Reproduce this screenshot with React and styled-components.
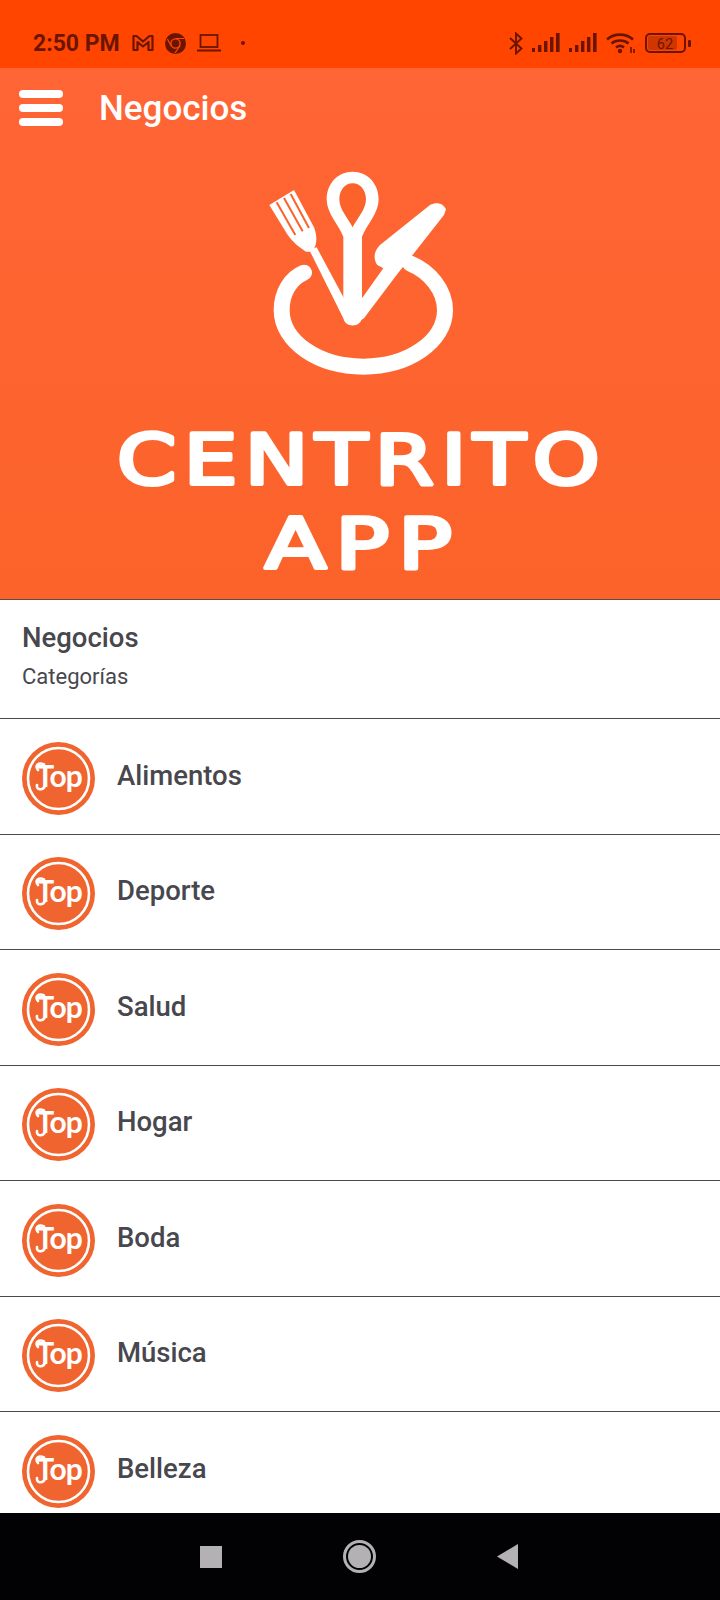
import React from "react";
import styled, { createGlobalStyle } from "styled-components";

const orange = "#fb632a";
const statusInk = "#6b1500";
const ink = "#47474d";

const categories = ["Alimentos", "Deporte", "Salud", "Hogar", "Boda", "Música", "Belleza"];

const GlobalStyle = createGlobalStyle`
  html, body {
    margin: 0;
    padding: 0;
    background: #fff;
    font-family: Roboto, "Liberation Sans", sans-serif;
  }
`;

const Screen = styled.div`
  width: 720px;
  height: 1600px;
  display: flex;
  flex-direction: column;
  overflow: hidden;
`;

const StatusBar = styled.div`
  height: 68px;
  flex-shrink: 0;
  background: #ff4500;
  display: flex;
  align-items: center;
  justify-content: space-between;
  padding: 18px 29px 0 33px;
  box-sizing: border-box;
  color: ${statusInk};
`;

const StatusGroup = styled.div`
  display: flex;
  align-items: center;
  gap: ${props => props.gap || 10}px;
`;

const Clock = styled.span`
  font-size: 23px;
  font-weight: 700;
  margin-right: 1px;
`;

const Hero = styled.div`
  height: 531px;
  flex-shrink: 0;
  background: linear-gradient(180deg, #ff6535 0%, ${orange} 100%);
  border-bottom: 1px solid #5c4a44;
`;

const Toolbar = styled.div`
  height: 80px;
  display: flex;
  align-items: center;
  padding-left: 19px;
  gap: 36px;
`;

const Burger = styled.div`
  width: 44px;
  display: flex;
  flex-direction: column;
  gap: 6px;
`;

const BurgerBar = styled.span`
  height: 8px;
  border-radius: 4px;
  background: #fff;
`;

const ToolbarTitle = styled.h1`
  margin: 0;
  color: #fff;
  font-size: 35px;
  font-weight: 500;
`;

const LogoArt = styled.svg`
  display: block;
  margin: 12px 0 0 100px;
`;

const WordText = styled.text`
  font-family: "DejaVu Sans", "Liberation Sans", sans-serif;
  font-weight: 400;
  font-size: 70px;
  letter-spacing: ${props => props.$spacing}px;
  fill: #fff;
  stroke: #fff;
  stroke-width: 4px;
  stroke-linejoin: round;
`;

const Section = styled.div`
  height: 119px;
  flex-shrink: 0;
  box-sizing: border-box;
  padding: 22px 22px 0;
  border-bottom: 1px solid #4a4a4a;
  color: ${ink};
`;

const SectionTitle = styled.div`
  font-size: 27.5px;
  font-weight: 500;
  line-height: 32px;
`;

const SectionSub = styled.div`
  font-size: 22px;
  line-height: 26px;
  margin-top: 10px;
`;

const List = styled.div`
  flex: 1;
  min-height: 0;
  overflow: hidden;
`;

const Row = styled.div`
  height: 115.5px;
  box-sizing: border-box;
  display: flex;
  align-items: center;
  gap: 22px;
  padding: 0 0 2px 22px;
  border-bottom: 1px solid #4a4a4a;
`;

const Badge = styled.svg`
  flex-shrink: 0;
  margin-top: 6px;
`;

const RowLabel = styled.span`
  font-size: 27.5px;
  font-weight: 500;
  color: ${ink};
`;

const NavBar = styled.div`
  height: 87px;
  flex-shrink: 0;
  background: #020103;
  display: grid;
  grid-template-columns: 22px 33px 21px;
  justify-content: space-between;
  align-items: center;
  padding: 0 202px 0 200px;
`;

const NavSquare = styled.div`
  width: 22px;
  height: 22px;
  background: #b3b1b4;
`;

const NavHome = styled.div`
  width: 33px;
  height: 33px;
  box-sizing: border-box;
  border-radius: 50%;
  border: 3px solid #b3b1b4;
  padding: 2px;
  &::after {
    content: "";
    display: block;
    width: 100%;
    height: 100%;
    border-radius: 50%;
    background: #b3b1b4;
  }
`;

const NavBack = styled.div`
  width: 21px;
  height: 25px;
  background: #b3b1b4;
  clip-path: polygon(100% 0, 100% 100%, 0 50%);
`;

const Dot = styled.span`
  width: 4px;
  height: 4px;
  border-radius: 50%;
  background: currentColor;
  margin-left: 9px;
`;

const GmailIcon = () => (
  <svg width="22" height="18" viewBox="0 0 22 18" fill="none" stroke="currentColor" strokeWidth="2.2" strokeLinejoin="round">
    <path d="M1.5 2 L1.5 16 L5.5 16 L5.5 8 L11 12.5 L16.5 8 L16.5 16 L20.5 16 L20.5 2 L17.5 2 L11 7.5 L4.5 2 Z" />
  </svg>
);

const ChromeIcon = () => (
  <svg width="21" height="21" viewBox="0 0 21 21">
    <circle cx="10.5" cy="10.5" r="10.5" fill="currentColor" />
    <circle cx="10.5" cy="10.5" r="4.6" fill="none" stroke="#ff4500" strokeWidth="1.4" />
    <path d="M10.5 5.5 H19 M6.2 13 L2.4 6 M14.8 13 L10 20" stroke="#ff4500" strokeWidth="1.2" fill="none" />
  </svg>
);

const LaptopIcon = () => (
  <svg width="24" height="18" viewBox="0 0 24 18" fill="none" stroke="currentColor">
    <rect x="3.5" y="1" width="17" height="12" strokeWidth="1.8" />
    <path d="M0 16.5 H24" strokeWidth="2" />
  </svg>
);

const BluetoothIcon = () => (
  <svg width="14" height="23" viewBox="0 0 14 23" fill="none" stroke="currentColor" strokeWidth="1.9">
    <path d="M1 6 L12.5 16.5 L7 21.5 L7 1.5 L12.5 6.5 L1 17" />
  </svg>
);

const SignalIcon = () => (
  <svg width="28" height="20" viewBox="0 0 28 20" fill="currentColor">
    <rect x="0" y="15" width="3" height="4" />
    <rect x="6" y="12" width="3.4" height="7" />
    <rect x="12" y="8" width="3.4" height="11" />
    <rect x="18" y="4" width="3.4" height="15" />
    <rect x="24" y="0" width="3.6" height="19" />
  </svg>
);

const WifiIcon = () => (
  <svg width="30" height="22" viewBox="0 0 30 22" fill="none" stroke="currentColor" strokeWidth="2.6">
    <path d="M1 7.5 C8 1 20 1 27 7.5" />
    <path d="M5.5 11.5 C10 7.5 18 7.5 22.5 11.5" />
    <path d="M10 15.5 C12.5 13.5 15.5 13.5 18 15.5" />
    <circle cx="14" cy="19" r="2.2" fill="currentColor" stroke="none" />
    <path d="M25 15 V21 M28 17 V21" strokeWidth="1.6" />
  </svg>
);

const BatteryIcon = () => (
  <svg width="46" height="20" viewBox="0 0 46 20">
    <rect x="1" y="1" width="39" height="18" rx="4" fill="none" stroke="currentColor" strokeWidth="2" />
    <rect x="3" y="3" width="29" height="14" rx="2" fill="currentColor" opacity="0.3" />
    <rect x="43" y="7" width="3" height="7" rx="1" fill="currentColor" />
    <text x="20" y="15.5" textAnchor="middle" fontFamily="Roboto, sans-serif" fontSize="14.5" fill="currentColor">62</text>
  </svg>
);

// Logo: coordinates of the cutlery come from the 3x crop, hence the scale
const CentritoLogo = () => (
  <LogoArt width="520" height="436" viewBox="0 0 520 436">
    <g transform="translate(140 -10) scale(0.3333)" fill="#fff">
      <path
        d="M192 368 C150 385 125 430 125 480 C125 575 235 650 370 650 C505 650 615 575 615 480 C615 420 570 365 510 340"
        fill="none"
        stroke="#fff"
        strokeWidth="48"
        strokeLinecap="round"
      />
      {/* fork */}
      <path d="M88 165 L162 120 L222 232 C234 262 230 290 216 305 L198 305 C165 285 150 265 140 250 Z" />
      <path d="M110 157 L166 255 M132 144 L188 244 M152 132 L207 234" stroke={orange} strokeWidth="6" fill="none" />
      <path d="M208 300 L230 292 L312 445 L342 525 L310 505 Z" />
      {/* knife */}
      <path d="M618 178 C610 160 590 155 570 165 L420 285 C400 305 400 328 412 345 L430 355 L366 445 L340 525 L372 505 L472 372 L510 325 L612 195 Z" />
      {/* spoon */}
      <path d="M338 65 C382 65 416 100 416 148 C416 190 380 225 366 260 L366 500 C366 535 310 535 310 500 L310 260 C296 225 260 190 260 148 C260 100 294 65 338 65 Z" />
      <path d="M338 100 C362 100 378 122 378 148 C378 178 352 205 338 232 C324 205 298 178 298 148 C298 122 314 100 338 100 Z" fill={orange} />
    </g>
    <WordText x="17" y="324" $spacing={6} textLength="490" lengthAdjust="spacingAndGlyphs">CENTRITO</WordText>
    <WordText x="165" y="408" $spacing={7} textLength="196" lengthAdjust="spacingAndGlyphs">APP</WordText>
  </LogoArt>
);

const TopBadge = () => (
  <Badge width="73" height="73" viewBox="0 0 73 73">
    <circle cx="36.5" cy="36.5" r="36.5" fill="#f0652f" />
    <circle cx="36.5" cy="36.5" r="30.5" fill="none" stroke="#fff" strokeWidth="2.6" />
    <text x="37" y="45" textAnchor="middle" fontFamily="Lato, sans-serif" fontWeight="700" fontSize="30" letterSpacing="-1" fill="#fff">Top</text>
    <path d="M16 28 C12 23 17 20 22 22.5 M23 44 C21 49 14 48 15 43" fill="none" stroke="#fff" strokeWidth="2.6" strokeLinecap="round" />
  </Badge>
);

export default function App() {
  return (
    <Screen>
      <GlobalStyle />
      <StatusBar>
        <StatusGroup gap={11}>
          <Clock>2:50 PM</Clock>
          <GmailIcon />
          <ChromeIcon />
          <LaptopIcon />
          <Dot />
        </StatusGroup>
        <StatusGroup gap={9}>
          <BluetoothIcon />
          <SignalIcon />
          <SignalIcon />
          <WifiIcon />
          <BatteryIcon />
        </StatusGroup>
      </StatusBar>
      <Hero>
        <Toolbar>
          <Burger>
            <BurgerBar />
            <BurgerBar />
            <BurgerBar />
          </Burger>
          <ToolbarTitle>Negocios</ToolbarTitle>
        </Toolbar>
        <CentritoLogo />
      </Hero>
      <Section>
        <SectionTitle>Negocios</SectionTitle>
        <SectionSub>Categorías</SectionSub>
      </Section>
      <List>
        {categories.map(name => (
          <Row key={name}>
            <TopBadge />
            <RowLabel>{name}</RowLabel>
          </Row>
        ))}
      </List>
      <NavBar>
        <NavSquare />
        <NavHome />
        <NavBack />
      </NavBar>
    </Screen>
  );
}
